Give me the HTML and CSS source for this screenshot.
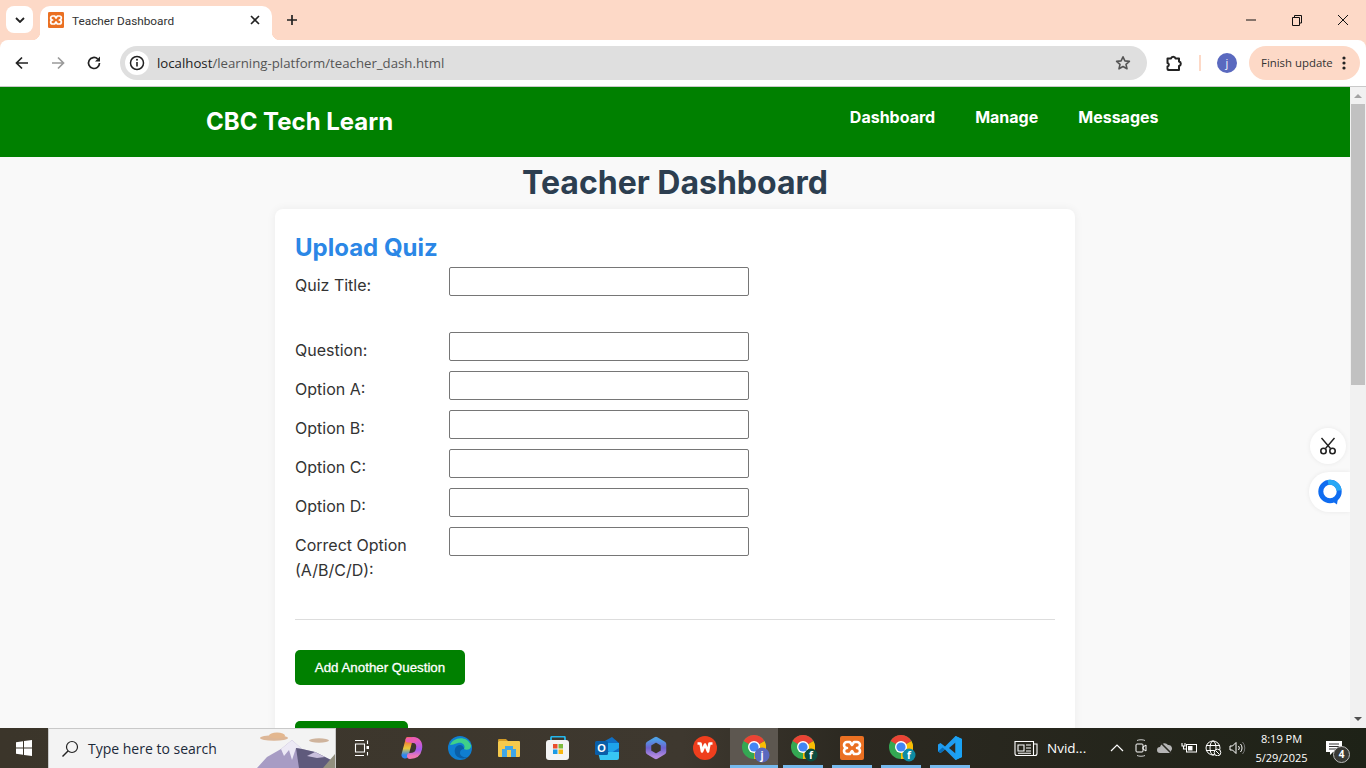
FILE: index.html
```html
<!DOCTYPE html>
<html lang="en">
<head>
<meta charset="utf-8">
<title>Teacher Dashboard</title>
<link rel="stylesheet" href="styles.css">
</head>
<body>
<svg class="defs" width="0" height="0" aria-hidden="true">
  <defs>
    <linearGradient id="cp-a" x1="0" y1="0" x2="0" y2="1"><stop offset="0" stop-color="#f06a3c"/><stop offset=".55" stop-color="#e9c93a"/><stop offset="1" stop-color="#2e86ef"/></linearGradient>
    <linearGradient id="cp-b" x1="0" y1="0" x2="0" y2="1"><stop offset="0" stop-color="#e85cc0"/><stop offset=".6" stop-color="#a45cf0"/><stop offset="1" stop-color="#f07ab5"/></linearGradient>
    <linearGradient id="m365" x1="0" y1="0" x2="0" y2="1"><stop offset="0" stop-color="#4f9fe6"/><stop offset=".5" stop-color="#6d62cf"/><stop offset="1" stop-color="#b48ae0"/></linearGradient>
    <symbol id="xampp" viewBox="0 0 24 24">
      <rect width="24" height="24" rx="2" fill="#ea7022"/>
      <path d="M7 6h3l2 3 2-3h3a3 3 0 0 1 0 6 3 3 0 0 1 0 6h-3l-2-3-2 3H7a3 3 0 0 1 0-6 3 3 0 0 1 0-6z" fill="none" stroke="#fff" stroke-width="2.600" stroke-linejoin="round"/>
    </symbol>
    <symbol id="chrome" viewBox="0 0 24 24">
      <circle cx="12" cy="12" r="12" fill="#34a853"/>
      <path d="M12 12 22.400 6A12 12 0 0 1 12 24Z" fill="#fbbc04"/>
      <path d="M12 12 1.600 6A12 12 0 0 1 22.400 6Z" fill="#ea4335"/>
      <circle cx="12" cy="12" r="6" fill="#fff"/>
      <circle cx="12" cy="12" r="4.600" fill="#4285f4"/>
    </symbol>
  </defs>
</svg>
<div class="window">
  <div class="tabstrip">
    <button class="tab-search" aria-label="Search tabs">
      <svg width="10" height="6" viewBox="0 0 10 6"><path d="M1 1l4 4 4-4" fill="none" stroke="#222" stroke-width="1.800"/></svg>
    </button>
    <div class="tab">
      <svg class="favicon" width="16" height="16"><use href="#xampp"/></svg>
      <span class="tab-title">Teacher Dashboard</span>
      <svg class="tab-close" width="10" height="10" viewBox="0 0 10 10"><path d="M1 1l8 8M9 1l-8 8" stroke="#222" stroke-width="1.600"/></svg>
    </div>
    <svg class="new-tab" width="12" height="12" viewBox="0 0 12 12"><path d="M6 1v10M1 6h10" stroke="#222" stroke-width="1.700"/></svg>
    <div class="win-controls">
      <svg width="46" height="12" viewBox="0 0 46 12"><path d="M18 6h10" stroke="#111" stroke-width="1"/></svg>
      <svg width="46" height="12" viewBox="0 0 46 12"><path d="M18.500 3.500h7v8h-7zM20.500 3.500v-2h7v7.500h-2" fill="none" stroke="#111"/></svg>
      <svg width="46" height="12" viewBox="0 0 46 12"><path d="M18 1l10 10M28 1L18 11" stroke="#111"/></svg>
    </div>
  </div>

  <div class="toolbar">
    <svg class="nav-icon" width="16" height="16" viewBox="0 0 16 16"><path d="M14 8H3M8 2.500 2.500 8 8 13.500" fill="none" stroke="#222" stroke-width="1.700"/></svg>
    <svg class="nav-icon" width="16" height="16" viewBox="0 0 16 16"><path d="M2 8h11M8 2.500 13.500 8 8 13.500" fill="none" stroke="#9a9a9a" stroke-width="1.700"/></svg>
    <svg class="nav-icon" width="16" height="16" viewBox="0 0 16 16"><path d="M13.500 8A5.500 5.500 0 1 1 11.700 3.900" fill="none" stroke="#222" stroke-width="1.700"/><path d="M14 1.500V6.500H9z" fill="#222"/></svg>
    <div class="omnibox">
      <span class="site-info">
        <svg width="16" height="16" viewBox="0 0 16 16"><circle cx="8" cy="8" r="6.500" fill="none" stroke="#222" stroke-width="1.500"/><path d="M8 7v4.500" stroke="#222" stroke-width="1.600"/><circle cx="8" cy="4.800" r="1" fill="#222"/></svg>
      </span>
      <span class="url"><span class="url-host">localhost</span>/learning-platform/teacher_dash.html</span>
      <svg class="star" width="16" height="16" viewBox="0 0 16 16"><path d="M8 1.800l1.900 4.100 4.500.5-3.400 3 1 4.400L8 11.500l-4 2.300 1-4.400-3.400-3 4.500-.5z" fill="none" stroke="#555" stroke-width="1.600" stroke-linejoin="round"/></svg>
    </div>
    <svg class="ext-icon" width="18" height="18" viewBox="0 0 18 18"><path d="M2.500 4.500H6a2.300 2.300 0 0 1 4.500 0h3.500v3a2.300 2.300 0 0 1 0 4.500v4H3.500a1 1 0 0 1-1-1v-2.500a1.800 1.800 0 0 0 0-3.500z" fill="none" stroke="#222" stroke-width="2" stroke-linejoin="round"/></svg>
    <span class="tool-sep"></span>
    <span class="avatar">j</span>
    <div class="update-pill">
      <span>Finish update</span>
      <svg width="4" height="14" viewBox="0 0 4 14"><circle cx="2" cy="2" r="1.600" fill="#222"/><circle cx="2" cy="7" r="1.600" fill="#222"/><circle cx="2" cy="12" r="1.600" fill="#222"/></svg>
    </div>
  </div>

  <div class="viewport">
    <div class="page">
      <header class="site-header">
        <div class="brand">CBC Tech Learn</div>
        <nav class="site-nav">
          <a>Dashboard</a>
          <a>Manage</a>
          <a>Messages</a>
        </nav>
      </header>
      <h1 class="page-title">Teacher Dashboard</h1>
      <section class="card">
        <h2 class="card-title">Upload Quiz</h2>
        <div class="row row-title"><label>Quiz Title:</label><input type="text"></div>
        <div class="row"><label>Question:</label><input type="text"></div>
        <div class="row"><label>Option A:</label><input type="text"></div>
        <div class="row"><label>Option B:</label><input type="text"></div>
        <div class="row"><label>Option C:</label><input type="text"></div>
        <div class="row"><label>Option D:</label><input type="text"></div>
        <div class="row"><label>Correct Option<br>(A/B/C/D):</label><input type="text"></div>
        <hr class="divider">
        <button class="btn btn-add">Add Another Question</button>
        <button class="btn btn-submit" aria-label="Submit"></button>
      </section>
      <div class="float-tool float-cut">
        <svg width="20" height="20" viewBox="0 0 20 20"><path d="M3.500 2l9 10.500M16.500 2l-9 10.500" fill="none" stroke="#222" stroke-width="1.400"/><circle cx="5.500" cy="15" r="2.700" fill="none" stroke="#222" stroke-width="1.600"/><circle cx="14.500" cy="15" r="2.700" fill="none" stroke="#222" stroke-width="1.600"/></svg>
      </div>
      <div class="float-tool float-chat">
        <svg width="26" height="26" viewBox="0 0 26 26"><path d="M15 22l5 3.500 1-7z" fill="#0f6cf0"/><circle cx="13" cy="12.500" r="9.200" fill="none" stroke="#0f6cf0" stroke-width="5"/><path d="M11 3.500a9.200 9.200 0 0 1 11 8" fill="none" stroke="#27a8f5" stroke-width="5"/></svg>
      </div>
    </div>
    <div class="scrollbar">
      <svg width="16" height="17" viewBox="0 0 16 17"><path d="M4 11l4-4 4 4z" fill="#a3a3a3"/></svg>
      <div class="scroll-track"><div class="scroll-thumb"></div></div>
      <svg width="16" height="17" viewBox="0 0 16 17"><path d="M4 6l4 4 4-4z" fill="#505050"/></svg>
    </div>
  </div>

  <div class="taskbar">
    <div class="start">
      <svg width="16" height="16" viewBox="0 0 16 16"><path d="M0 2.300 7 1.300V7.500H0zM8 1.100 16 0V7.500H8zM0 8.500H7V14.700L0 13.700zM8 8.500H16V16L8 14.900z" fill="#fff"/></svg>
    </div>
    <div class="search">
      <svg width="18" height="18" viewBox="0 0 18 18"><circle cx="11" cy="7" r="5.500" fill="none" stroke="#222" stroke-width="1.200"/><path d="M7 11 1.500 16.500" stroke="#222" stroke-width="1.500"/></svg>
      <span class="search-text">Type here to search</span>
      <svg class="search-art" width="78" height="38" viewBox="0 0 78 38">
        <ellipse cx="17" cy="8" rx="14" ry="2.800" fill="#dcb697"/>
        <ellipse cx="20" cy="5.500" rx="8" ry="3" fill="#e3b78f"/>
        <ellipse cx="62" cy="10.500" rx="10" ry="2.200" fill="#cfb39c"/>
        <path d="M0 38 10 27l14-8 11-9 10 9 13 3 20 10v6z" fill="#a79cc4"/>
        <path d="M24 19l11-9 10 9-6-1-4 12-3-10-5 6z" fill="#ece9f5"/>
        <path d="M39 18l6 1 13 3 20 10v6H42z" fill="#5f5a7c"/>
        <path d="M50 26l8-4 10 5-8 1z" fill="#c9bfdc"/>
        <path d="M66 38 78 24v14z" fill="#93907f"/>
      </svg>
    </div>
    <div class="task-slot">
      <svg width="16" height="16" viewBox="0 0 16 16"><path d="M1 .5h9M1 15.500h9M1.500 4h9v8h-9zM13.500 .5v3.500M13.500 12v3.500" fill="none" stroke="#fff" stroke-width="1.100"/><rect x="12.500" y="6" width="2.500" height="3" fill="#fff"/></svg>
    </div>
    <div class="task-slot">
      <svg width="24" height="22" viewBox="0 0 24 22"><path d="M10 3 6 18" fill="none" stroke="url(#cp-a)" stroke-width="7" stroke-linecap="round"/><path d="M14 3c5 0 7 4 6 9-1 5-4 7-9 7" fill="none" stroke="url(#cp-b)" stroke-width="6" stroke-linecap="round"/><path d="M9 3h6" stroke="#ee5db0" stroke-width="5" stroke-linecap="round"/></svg>
    </div>
    <div class="task-slot">
      <svg width="24" height="24" viewBox="0 0 24 24"><circle cx="12" cy="12" r="12" fill="#0f7ed1"/><path d="M2 9C4 2 18-2 23 9c1 4-4 6-7 4 2-4-2-7-6-6-4 1-6 2-8 2z" fill="#3fd08a"/><path d="M12 9c-4 0-6 4-5 8 1 5 8 7 13 4-4 1-8-1-8-4 0-3 2-4 4-4 0-2-2-4-4-4z" fill="#0a5fa8"/></svg>
    </div>
    <div class="task-slot">
      <svg width="22" height="18" viewBox="0 0 22 18"><path d="M0 1a1 1 0 0 1 1-1h7l2 2h-10z" fill="#d19a25"/><rect y="2" width="22" height="16" rx="1" fill="#f5c94c"/><path d="M7 7h8v3h3v8H4v-8h3z" fill="#3ea6e8"/><rect x="9" y="11" width="4" height="7" fill="#f5c94c"/></svg>
    </div>
    <div class="task-slot">
      <svg width="24" height="24" viewBox="0 0 24 24"><path d="M5 5V2a1.500 1.500 0 0 1 1.500-1.500h11A1.500 1.500 0 0 1 19 2v3" fill="none" stroke="#25b6ea" stroke-width="1.800"/><rect y="4" width="23" height="20" rx="3" fill="#f4f4f4"/><rect x="7" y="8" width="4.500" height="4.500" fill="#ea4f2e"/><rect x="12.500" y="8" width="4.500" height="4.500" fill="#7ebb3c"/><rect x="7" y="13.500" width="4.500" height="4.500" fill="#1c9be6"/><rect x="12.500" y="13.500" width="4.500" height="4.500" fill="#f9b812"/></svg>
    </div>
    <div class="task-slot">
      <svg width="24" height="24" viewBox="0 0 24 24"><path d="M8 6 17 1l7 6v9H8z" fill="#0f6fc5"/><path d="M8 7h16v5l-8 5-8-5z" fill="#1ea3ea"/><path d="M3 16h21v6a2 2 0 0 1-2 2H5z" fill="#38c6f4"/><rect y="5" width="13" height="14" rx="1.500" fill="#0a5ea8"/><text class="outlook-o" x="6.500" y="16">O</text></svg>
    </div>
    <div class="task-slot">
      <svg width="22" height="24" viewBox="0 0 22 24"><path d="M11 3.500 18.500 8v8L11 20.500 3.500 16V8z" fill="#3a352c" stroke="url(#m365)" stroke-width="5.500" stroke-linejoin="round"/></svg>
    </div>
    <div class="task-slot">
      <svg width="24" height="24" viewBox="0 0 24 24"><circle cx="12" cy="12" r="12" fill="#ef3e1d"/><path d="M4.500 7.500h3l1.500 8 3-7 3 7 1.500-8h3" fill="none" stroke="#fff" stroke-width="2.600" stroke-linejoin="round"/></svg>
    </div>
    <div class="task-slot task-active">
      <svg width="28" height="28" viewBox="0 0 28 28"><use href="#chrome" width="24" height="24"/><circle cx="20" cy="20" r="7.500" fill="#5a69bf"/><text class="badge-text" x="20" y="24">j</text></svg>
    </div>
    <div class="task-slot task-open">
      <svg width="28" height="28" viewBox="0 0 28 28"><use href="#chrome" width="24" height="24"/><circle cx="20" cy="20" r="6.500" fill="#0c4d3f"/><text class="badge-text" x="20" y="24">f</text></svg>
    </div>
    <div class="task-slot task-open">
      <svg width="24" height="24"><use href="#xampp"/></svg>
    </div>
    <div class="task-slot task-open">
      <svg width="28" height="28" viewBox="0 0 28 28"><use href="#chrome" width="24" height="24"/><circle cx="20" cy="20" r="6.500" fill="#0e8ba3"/><text class="badge-text" x="20" y="24">f</text></svg>
    </div>
    <div class="task-slot task-open">
      <svg width="24" height="24" viewBox="0 0 24 24"><path d="M17.500 0 24 3v18l-6.500 3L7 13.500l-4.500 3.500L0 15.500v-7L2.500 7 7 10.500z" fill="#1f9cf0"/><path d="M17.500 6.500 11 12l6.500 5.500z" fill="#2e2a22"/><path d="M17.500 0 24 3v18l-6.500 3z" fill="#1aa3f5"/><path d="M0 15.500 2.500 17l4.500-3.500-2.500-2z" fill="#0a6cb5"/></svg>
    </div>
    <div class="widget">
      <svg width="24" height="18" viewBox="0 0 24 18"><path d="M1 2.500h18.500v14H3a2 2 0 0 1-2-2zM19.500 5H23v9.500a2 2 0 0 1-2 2h-1.500M4 6h6v6H4zM12 6h5M12 9h5M12 12h5M4 14.200h13" fill="none" stroke="#fff" stroke-width="1.100"/></svg>
      <span>Nvid...</span>
    </div>
    <div class="tray">
      <svg class="tray-icon" width="14" height="8" viewBox="0 0 14 8"><path d="M1 7l6-6 6 6" fill="none" stroke="#fff" stroke-width="1.200"/></svg>
      <svg class="tray-icon" width="14" height="18" viewBox="0 0 14 18"><rect x="2" y="5" width="7" height="8" rx="1" fill="none" stroke="#fff"/><path d="M9 8l3-2v6l-3-2z" fill="none" stroke="#fff"/><path d="M3 1.500c2-1 6-1 8 0M3 16.500c2 1 6 1 8 0" fill="none" stroke="#ccc"/></svg>
      <svg class="tray-icon" width="16" height="14" viewBox="0 0 16 14"><path d="M3 12a3 3 0 0 1 0-6 4.500 4.500 0 0 1 8-2 3.500 3.500 0 0 1 3 6 2 2 0 0 1-1 2z" fill="#b5b5b5"/><path d="M2 0l13 13" stroke="#2a2a22" stroke-width="1.500"/></svg>
      <svg class="tray-icon" width="16" height="12" viewBox="0 0 16 12"><path d="M1 1v3h3V1M2.500 4v3H6" fill="none" stroke="#fff" stroke-width="1.100"/><rect x="5.500" y="2.500" width="10" height="7.500" fill="none" stroke="#fff"/><rect x="7" y="4" width="4.500" height="4.500" fill="#fff"/></svg>
      <svg class="tray-icon" width="16" height="16" viewBox="0 0 16 16"><circle cx="8" cy="8" r="7" fill="none" stroke="#fff"/><ellipse cx="8" cy="8" rx="3" ry="7" fill="none" stroke="#fff"/><path d="M1 5.500h14M1 10.500h14" stroke="#fff"/><circle cx="12.500" cy="12.500" r="3.300" fill="#23261c" stroke="#fff"/><path d="M10.500 10.500l4 4" stroke="#fff"/></svg>
      <svg class="tray-icon" width="16" height="14" viewBox="0 0 16 14"><path d="M1 5h2.500L7 1.500v11L3.500 9H1z" fill="none" stroke="#fff"/><path d="M9.500 5a3 3 0 0 1 0 4M11.500 3a6 6 0 0 1 0 8" fill="none" stroke="#fff"/><path d="M13.500 1a9 9 0 0 1 0 12" fill="none" stroke="#777"/></svg>
      <div class="clock"><span>8:19 PM</span><span>5/29/2025</span></div>
      <div class="notify">
        <svg width="16" height="15" viewBox="0 0 16 15"><path d="M0 0h16v11H7l-3 3v-3H0z" fill="#fff"/><path d="M3 3h10M3 5.500h10M3 8h7" stroke="#333"/></svg>
        <span class="notify-count">4</span>
      </div>
    </div>
  </div>
</div>
</body>
</html>
```
FILE: styles.css
```css
* { box-sizing: border-box; }
html, body { margin: 0; padding: 0; height: 100%; overflow: hidden; }
body { font-family: Inter, "Liberation Sans", sans-serif; background: #fdd9c7; }
.defs { position: absolute; }
svg { display: block; flex: none; }

.window { display: flex; flex-direction: column; width: 1366px; height: 768px; }

/* tab strip */
.tabstrip { height: 40px; flex: none; display: flex; align-items: flex-start; background: #fdd9c7; padding-left: 6px; }
.tab-search { width: 27px; height: 27px; margin-top: 6px; border: 0; border-radius: 8px; background: #fff; display: flex; align-items: center; justify-content: center; padding: 0; }
.tab { width: 232px; height: 34px; margin: 6px 0 0 7px; background: #fff; border-radius: 10px 10px 0 0; display: flex; align-items: center; padding: 0 12px 6px 8px; position: relative; }
.tab::before, .tab::after { content: ""; position: absolute; bottom: 0; width: 8px; height: 8px; }
.tab::before { left: -8px; background: radial-gradient(circle at 0 0, transparent 8px, #fff 8.500px); }
.tab::after { right: -8px; background: radial-gradient(circle at 100% 0, transparent 8px, #fff 8.500px); }
.tab-title { margin: 1px 0 0 8px; flex: 1; font: 11.800px Roboto, "Open Sans", sans-serif; color: #333; }
.new-tab { margin: 14px 0 0 14px; }
.win-controls { margin-left: auto; display: flex; align-items: center; height: 40px; }

/* toolbar */
.toolbar { height: 47px; flex: none; background: #fff; border-radius: 8px 8px 0 0; border-bottom: 1px solid #c9c9c9; display: flex; align-items: center; padding: 0 6px 1px 14px; }
.nav-icon { margin-right: 20px; }
.nav-icon:nth-child(3) { margin-right: 18px; }
.omnibox { width: 1027px; height: 34px; margin-left: 0; border-radius: 17px; background: #dfdfdf; display: flex; align-items: center; padding: 0 16px 0 5px; }
.site-info { width: 24px; height: 24px; border-radius: 50%; background: #fff; display: flex; align-items: center; justify-content: center; }
.url { margin-left: 8px; flex: 1; font: 13.220px "Open Sans", "Noto Sans", sans-serif; color: #555; }
.url-host { color: #222; }
.ext-icon { margin-left: 18px; }
.tool-sep { width: 2px; height: 16px; margin-left: 16px; background: #fdd9c7; }
.avatar { width: 20px; height: 20px; margin-left: 16px; border-radius: 50%; background: #5a69bf; color: #fff; font: 11px/20px "Open Sans", sans-serif; text-align: center; }
.update-pill { width: 111px; height: 34px; margin-left: 12px; border-radius: 17px; background: #fdd9c7; display: flex; align-items: center; justify-content: space-between; padding: 0 14px 0 12px; font: 11.400px "Open Sans", "Noto Sans", sans-serif; color: #333; }

/* viewport */
.viewport { flex: 1; min-height: 0; display: flex; }
.page { flex: 1; min-width: 0; position: relative; overflow: hidden; background: #f9f9f9; }
.scrollbar { width: 16px; flex: none; background: #f1f1f1; display: flex; flex-direction: column; }
.scroll-track { flex: 1; padding: 0 1px; }
.scroll-thumb { height: 281px; background: #c1c1c1; }

.site-header { height: 70px; background: #008000; color: #fff; display: flex; align-items: center; justify-content: space-between; padding: 0 191.500px 0 206px; }
.brand { font-size: 24px; font-weight: 700; line-height: 30px; }
.site-nav { display: flex; gap: 40px; font-size: 16px; font-weight: 700; margin-bottom: 11px; }

.page-title { margin: 0; height: 52px; font-size: 32px; line-height: 51px; font-weight: 700; text-align: center; color: #2c3e50; }
.card { width: 800px; margin: 0 auto; padding: 20px; height: 560px; background: #fff; border-radius: 8px; box-shadow: 0 0 10px rgba(0,0,0,.06); }
.card-title { margin: 0; font-size: 24px; line-height: 38px; font-weight: 700; color: #2b87e6; }
.row { display: flex; align-items: flex-start; margin-bottom: 8px; }
.row-title { margin-bottom: 34px; }
.row label { width: 154px; padding-top: 6px; font-size: 16px; line-height: 25px; color: #333; flex: none; }
.row input { width: 300px; height: 29px; margin: 0; padding: 1px 2px; border: 1px solid #767676; border-radius: 2px; background: #fff; }
.divider { margin: 36px 0 30px; border: 0; border-top: 1px solid #ddd; }
.btn { display: block; border: 0; border-radius: 5px; background: #008000; color: #fff; font: 400 13.333px "Liberation Sans", Arial, sans-serif; -webkit-text-stroke: .3px #fff; padding: 0; height: 35px; }
.btn-add { width: 170px; margin-bottom: 36px; }
.btn-submit { width: 113px; }

.float-tool { position: absolute; display: flex; align-items: center; justify-content: center; background: #fff; box-shadow: 0 0 5px rgba(0,0,0,.07); }
.float-cut { top: 341px; right: 4px; width: 36px; height: 36px; border-radius: 50%; }
.float-chat { top: 385px; right: 0; width: 41px; height: 40px; border-radius: 20px 0 0 20px; }

/* taskbar */
.taskbar { height: 40px; flex: none; display: flex; color: #fff; background: linear-gradient(90deg, #3b352a 0, #3e382f 50%, #2c2921 62%, #1e2217 100%); font-family: "Open Sans", "Noto Sans", sans-serif; }
.start { width: 48px; display: flex; align-items: center; justify-content: center; }
.search { width: 288px; display: flex; align-items: center; background: #f3f3f3; border: 1px solid #c9c9c9; border-bottom: 0; padding-left: 12px; position: relative; overflow: hidden; color: #1c2a3a; }
.search-text { margin-left: 9px; font-size: 14px; }
.search-art { position: absolute; right: 0; bottom: 0; }
.task-slot { width: 49px; display: flex; align-items: center; justify-content: center; flex: none; position: relative; }
.task-slot:nth-of-type(3) { margin-left: 1px; }
.task-active { background: #5d5750; background-clip: padding-box; border-left: 1px solid transparent; }
.task-active::after, .task-open::after { content: ""; position: absolute; bottom: 0; height: 3px; background: #76b9ed; }
.task-active::after { left: 0; right: 0; }
.task-open::after { left: 5px; right: 4px; }
.task-slot > svg[width="28"] { margin: 2px 0 0 4px; }
.outlook-o { font: 700 11px "Liberation Sans", sans-serif; fill: #fff; text-anchor: middle; }
.badge-text { font: 700 10px "Open Sans", sans-serif; fill: #fff; text-anchor: middle; }
.widget { margin-left: 40px; width: 88px; display: flex; align-items: center; gap: 9px; font-size: 13.500px; }
.tray { flex: 1; display: flex; align-items: center; padding-left: 3px; }
.tray-icon { width: 24px; }
.clock { width: 65px; display: flex; flex-direction: column; align-items: center; font-size: 11px; line-height: 19px; }
.notify { margin-left: 5px; position: relative; width: 30px; height: 30px; display: flex; align-items: center; justify-content: center; }
.notify-count { position: absolute; right: -1px; bottom: 0; width: 17px; height: 17px; border-radius: 50%; background: #3a3a35; border: 1.500px solid #bbb; font-size: 10px; font-weight: 700; line-height: 14px; text-align: center; }
```
